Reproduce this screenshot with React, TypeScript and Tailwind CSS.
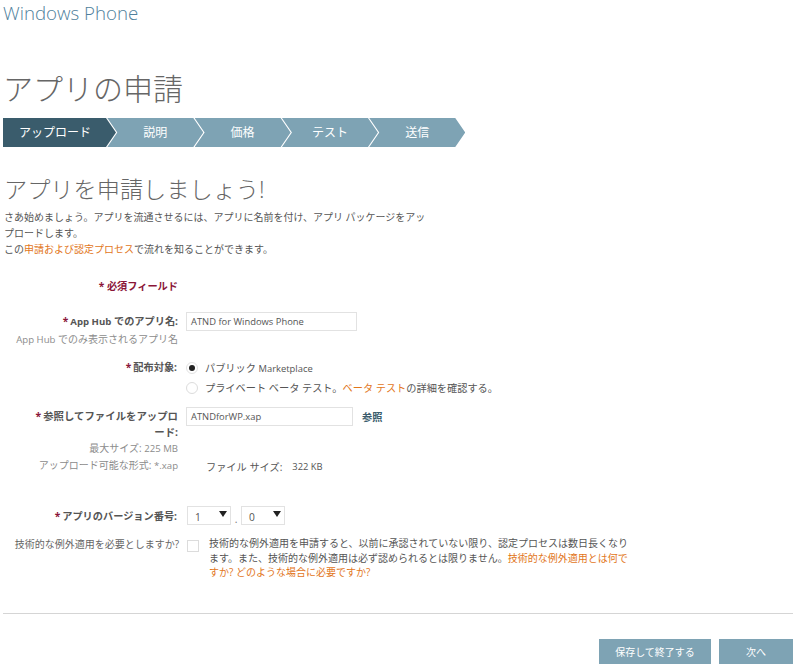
import React from "react";

const steps = ["説明", "価格", "テスト", "送信"];

const Req = () => <span className="text-[#8a1538] mr-[2px]">*</span>;

const Arrow = () => (
  <svg width="8" height="6" viewBox="0 0 8 6" className="shrink-0">
    <path d="M0 0h8L4 6z" fill="#222" />
  </svg>
);

const Select = ({ value }: { value: string }) => (
  <div className="w-[44px] h-[19px] border border-[#e2e2e2] flex items-center justify-between pl-[7px] pr-[3px] text-[#555]">
    <span className="mt-[2px]">{value}</span>
    <span className="mb-[4px]">
      <Arrow />
    </span>
  </div>
);

const App = () => {
  return (
    <div
      className="w-[800px] h-[670px] overflow-hidden bg-white text-[10.2px] text-[#555] leading-[16px]"
      style={{ fontFamily: '"Open Sans", "Noto Sans CJK JP", sans-serif' }}
    >
      <div className="pl-[3px] h-[68px] text-[18.7px] leading-[26px] font-light text-[#4f7f9c]">
        Windows Phone
      </div>

      <h1 className="pl-[3px] h-[50px] text-[30px] leading-[42px] font-light text-[#666]">アプリの申請</h1>

      <div className="flex ml-[3px] h-[29px] text-[12px] text-white">
        <div className="w-[113px] flex items-center bg-[#3a5c6c] pl-[16px] pr-[10px] [clip-path:polygon(0_0,calc(100%-10px)_0,100%_50%,calc(100%-10px)_100%,0_100%)]">
          アップロード
        </div>
        {steps.map((s) => (
          <div
            key={s}
            className="w-[96px] -ml-[8.7px] shrink-0 flex items-center justify-center bg-[#7ea3b4] [clip-path:polygon(0_0,calc(100%-10px)_0,100%_50%,calc(100%-10px)_100%,0_100%,10px_50%)]"
          >
            {s}
          </div>
        ))}
      </div>

      <h2 className="pl-[4px] mt-[26px] h-[33px] text-[23.2px] leading-[33px] font-light text-[#666]">
        アプリを申請しましょう!
      </h2>
      <div className="pl-[4px] mt-[3px] w-[428px] text-[10px]">
        <p>さあ始めましょう。アプリを流通させるには、アプリに名前を付け、アプリ パッケージをアップロードします。</p>
        <p>
          この<span className="text-[#e2761b]">申請および認定プロセス</span>で流れを知ることができます。
        </p>
      </div>

      <div className="mt-[21px] w-[178px] text-right font-bold text-[#8a1538]">* 必須フィールド</div>

      <div className="flex mt-[18px]">
        <div className="w-[178px] text-right">
          <div className="pt-[1px] font-bold">
            <Req />
            <span className="text-[9.6px]">App Hub</span> でのアプリ名:
          </div>
          <div className="mt-[1px] text-[10px] text-[#8c8c8c]">
            <span className="text-[9.6px]">App Hub</span> でのみ表示されるアプリ名
          </div>
        </div>
        <div className="ml-[8px] w-[171px] h-[19px] border border-[#e2e2e2] pl-[4px] leading-[17px] text-[9.4px]">
          ATND for Windows Phone
        </div>
      </div>

      <div className="flex mt-[10px]">
        <div className="w-[177px] pt-[1px] text-right font-bold">
          <Req />
          配布対象:
        </div>
        <div className="ml-[9px]">
          <div className="flex items-center h-[20px]">
            <span className="w-[12px] h-[12px] rounded-full border border-[#e2e2e2] flex items-center justify-center">
              <span className="w-[6px] h-[6px] rounded-full bg-[#222]" />
            </span>
            <span className="ml-[7px]">
              パブリック <span className="text-[9.4px]">Marketplace</span>
            </span>
          </div>
          <div className="flex items-center h-[20px]">
            <span className="w-[12px] h-[12px] rounded-full border border-[#dcdcdc]" />
            <span className="ml-[7px]">
              プライベート ベータ テスト。<span className="text-[#e2761b]">ベータ テスト</span>の詳細を確認する。
            </span>
          </div>
        </div>
      </div>

      <div className="flex mt-[9px]">
        <div className="w-[178px] pl-[28px] text-right">
          <div className="pt-[1px] font-bold text-[10.4px]">
            <Req />
            参照してファイルをアップロード:
          </div>
          <div className="text-[10px] text-[#8c8c8c]">
            最大サイズ: <span className="text-[9.6px]">225 MB</span>
          </div>
          <div className="text-[10px] text-[#8c8c8c]">
            アップロード可能な形式: <span className="text-[9.6px]">*.xap</span>
          </div>
        </div>
        <div className="ml-[8px] flex-1">
          <div className="flex items-center">
            <div className="w-[167px] h-[19px] border border-[#e2e2e2] pl-[4px] leading-[17px] text-[9.4px]">
              ATNDforWP.xap
            </div>
            <span className="ml-[9px] font-bold text-[#3a5c6c]">参照</span>
          </div>
          <div className="flex mt-[33px] ml-[20px]">
            <span>ファイル サイズ:</span>
            <span className="ml-[10px] text-[9.4px]">322 KB</span>
          </div>
        </div>
      </div>

      <div className="flex items-center mt-[31px]">
        <div className="w-[177px] text-right font-bold">
          <Req />
          アプリのバージョン番号:
        </div>
        <div className="ml-[10px] flex items-end">
          <Select value="1" />
          <span className="w-[10px] text-center text-[#777] leading-[12px]">.</span>
          <Select value="0" />
        </div>
      </div>

      <div className="flex mt-[11px] text-[10px]">
        <div className="w-[179px] text-right text-[#666]">技術的な例外適用を必要としますか?</div>
        <span className="ml-[8px] mt-[4px] w-[12px] h-[12px] border border-[#dcdcdc] shrink-0" />
        <p className="ml-[10px] w-[424px] leading-[14.7px]">
          技術的な例外適用を申請すると、以前に承認されていない限り、認定プロセスは数日長くなります。また、技術的な例外適用は必ず認められるとは限りません。
          <span className="text-[#e2761b]">技術的な例外適用とは何ですか? どのような場合に必要ですか?</span>
        </p>
      </div>

      <div className="mt-[33px] ml-[3px] w-[790px] border-t border-[#d5d5d5]" />

      <div className="flex justify-end gap-[8px] mt-[25px] mr-[7px] text-[10px] text-white">
        <div className="w-[112px] h-[25px] bg-[#7ea3b4] flex items-center justify-center">保存して終了する</div>
        <div className="w-[74px] h-[25px] bg-[#7ea3b4] flex items-center justify-center">次へ</div>
      </div>
    </div>
  );
};

export default App;
